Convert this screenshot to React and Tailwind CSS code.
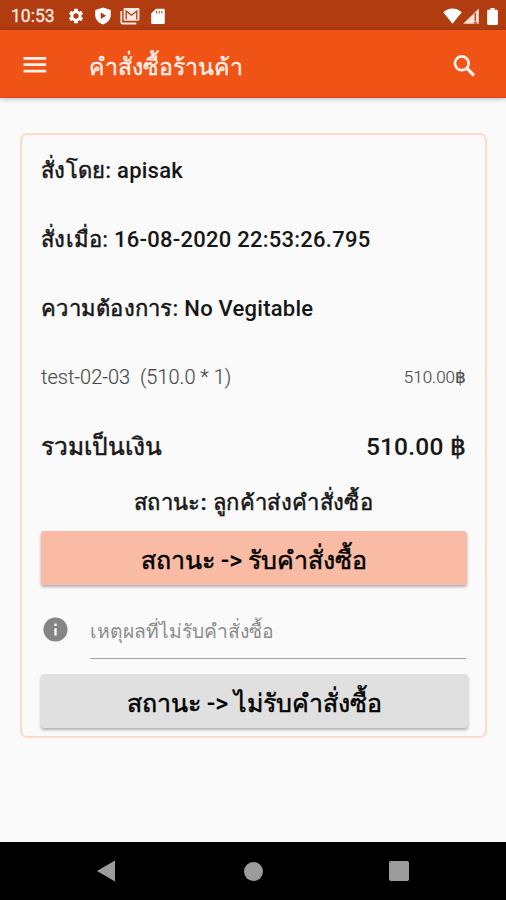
import { MdInfo, MdSettings } from 'react-icons/md'

function StatusBar() {
  return (
    <div className="flex h-[30px] shrink-0 items-center justify-between bg-[#b03c10] pt-[2px] pr-[8px] pl-[11px] text-[#ffe9e2]">
      <div className="flex items-center">
        <span className="w-[56px] pt-[2px] text-[17.5px] leading-none [-webkit-text-stroke:0.3px]">10:53</span>
        <MdSettings className="h-[18px] w-[18px] text-white" />
        <svg className="ml-[9px] h-[18px] w-[18px]" viewBox="0 0 18 18" fill="#fff">
          <path
            fillRule="evenodd"
            d="M9 .4 16.800 3v5.200c0 4.200-3.200 7.600-7.800 9.200C4.400 15.800 1.200 12.400 1.200 8.200V3zM6.800 5.600v6.300l5.300-3.150z"
          />
        </svg>
        <svg className="ml-[8px] h-[18px] w-[20px]" viewBox="0 0 20 18">
          <path d="M1.300 4v11.200c0 .8.500 1.300 1.300 1.300h13.700" fill="none" stroke="#ffe9e2" strokeWidth="1.800" />
          <rect x="3.600" y="1" width="15.800" height="12.800" rx="1.200" fill="#ffe9e2" />
          <path d="M6.200 12.500V4l5.300 4.200L16.800 4v8.500" fill="none" stroke="#b03c10" strokeWidth="1.300" />
        </svg>
        <svg className="ml-[11px] h-[17px] w-[14px]" viewBox="0 0 14 17" fill="#fff">
          <path
            fillRule="evenodd"
            d="M5 .8h7.500c.8 0 1.300.5 1.300 1.300v12.600c0 .8-.5 1.300-1.300 1.300h-11C.7 16 .2 15.500.2 14.700V5.600zM5 3v2.500h1V3zM7.700 3v2.500h1V3zM10.400 3v2.500h1V3z"
          />
        </svg>
      </div>
      <div className="flex items-center">
        <svg className="h-[16px] w-[19px]" viewBox="0 0 19 16" fill="#fff">
          <path d="M9.500 15.800.2 4.300C2.900 2 6 .4 9.500.4s6.600 1.600 9.300 3.900z" />
        </svg>
        <svg className="ml-[1px] h-[16px] w-[16px]" viewBox="0 0 16 16">
          <path d="M.2 15.800 15.800.4v15.400z" fill="#ffe0d6" />
          <path d="M12.300 5v8.200M14.300 14.800h-3.500" stroke="#b03c10" strokeWidth="1.300" />
        </svg>
        <svg className="ml-[8px] h-[17px] w-[11px]" viewBox="0 0 11 17" fill="#fff">
          <path d="M3.400 0h4.200v1.800h2c.8 0 1.300.5 1.300 1.300v12.500c0 .8-.5 1.300-1.300 1.300H1.400C.6 16.900.1 16.400.1 15.600V3.100c0-.8.5-1.300 1.300-1.300h2z" />
        </svg>
      </div>
    </div>
  )
}

function AppBar() {
  return (
    <header className="flex h-[68px] shrink-0 items-center border-b border-[#d8401c] bg-[#ef5316] pr-[29px] pl-[23px] text-[#fff0ea] shadow-[0_1px_5px_rgba(0,40,40,0.28)]">
      <svg className="mt-[3px] h-[18px] w-[24px]" viewBox="0 0 24 18" fill="currentColor">
        <path d="M.5 1h22.700v2.800H.5zM.5 7.300h22.700v2.800H.5zM.5 13.700h22.700v2.800H.5z" />
      </svg>
      <h1 className="ml-[42px] flex-1 pt-[6px] text-[23.2px] leading-[30px] [-webkit-text-stroke:0.35px]">
        คำสั่งซื้อร้านค้า
      </h1>
      <svg className="mt-[4px] h-[24px] w-[24px]" viewBox="0 0 24 24" fill="none" stroke="currentColor">
        <circle cx="8.800" cy="9.300" r="6.900" strokeWidth="2.700" />
        <path d="m13.700 14.200 7.300 7.300" strokeWidth="3.300" />
      </svg>
    </header>
  )
}

function NavBar() {
  return (
    <nav className="flex h-[58px] shrink-0 items-center justify-between bg-black pr-[97px] pl-[96px]">
      <svg className="h-[22px] w-[20px]" viewBox="0 0 20 22" fill="#9c9c9c">
        <path d="M1 11 19 .6v20.800z" />
      </svg>
      <span className="ml-[2px] h-[19px] w-[19px] rounded-full bg-[#9c9c9c]" />
      <span className="h-[20px] w-[20px] rounded-[2px] bg-[#9c9c9c]" />
    </nav>
  )
}

// the Thai face has no medium weight, so a thin stroke thickens it
function Thai({ children }) {
  return <span className="[-webkit-text-stroke:0.5px]">{children}</span>
}

function Field({ label, value }) {
  return (
    <p className="flex h-[69px] shrink-0 items-center pt-[2px] tracking-[0.25px] whitespace-pre">
      <Thai>{label}</Thai>: {value}
    </p>
  )
}

export default function App() {
  return (
    <div className="flex h-[900px] w-[506px] flex-col overflow-hidden bg-[#fafafa] font-['Roboto',sans-serif] text-[#161616]">
      <StatusBar />
      <AppBar />

      <main className="flex-1 px-[20px] pt-[35px]">
        <section className="flex h-[605px] w-[467px] flex-col rounded-[7px] border-2 border-[#fbdacd] px-[19px] text-[22px] font-medium">
          <Field label="สั่งโดย" value="apisak" />
          <Field label="สั่งเมื่อ" value="16-08-2020 22:53:26.795" />
          <Field label="ความต้องการ" value="No Vegitable" />

          <div className="flex h-[69px] shrink-0 items-center justify-between text-[#4a4a4a]">
            <span className="text-[20px] font-light whitespace-pre [-webkit-text-stroke:0.15px]">test-02-03  (510.0 * 1)</span>
            <span className="pt-[3px] text-[17px] font-light [-webkit-text-stroke:0.15px]">510.00฿</span>
          </div>

          <div className="flex h-[69px] shrink-0 items-center justify-between pt-[4px] text-[24.500px]">
            <Thai>รวมเป็นเงิน</Thai>
            <span className="tracking-[0.2px]">
              510.00 <Thai>฿</Thai>
            </span>
          </div>

          <p className="flex h-[42px] shrink-0 items-center justify-center pt-[2px] tracking-[0.400px]">
            <Thai>สถานะ: ลูกค้าส่งคำสั่งซื้อ</Thai>
          </p>

          <button className="mt-[9px] flex h-[54px] w-[426px] shrink-0 items-center justify-center rounded-[3px] bg-[#f9bba4] pt-[5px] text-[25px] whitespace-pre text-black shadow-[0_2px_3px_rgba(0,0,0,0.3)]">
            <Thai>สถานะ</Thai> -&gt; <Thai>รับคำสั่งซื้อ</Thai>
          </button>

          <div className="mt-[14px] flex h-[60px] shrink-0 items-stretch">
            <MdInfo className="mt-[16px] h-[29px] w-[29px] text-[#858585]" />
            <label className="ml-[20px] flex flex-1 items-center border-b-[1.500px] border-[#a0a0a0] pt-[7px] text-[19.300px] font-normal text-[#8c8c8c]">
              เหตุผลที่ไม่รับคำสั่งซื้อ
            </label>
          </div>

          <button className="mt-[15px] flex h-[54px] w-[427px] shrink-0 items-center justify-center rounded-[3px] bg-[#e0e0e0] pt-[5px] text-[25px] whitespace-pre text-black shadow-[0_2px_3px_rgba(0,0,0,0.3)]">
            <Thai>สถานะ</Thai> -&gt; <Thai>ไม่รับคำสั่งซื้อ</Thai>
          </button>
        </section>
      </main>

      <NavBar />
    </div>
  )
}
